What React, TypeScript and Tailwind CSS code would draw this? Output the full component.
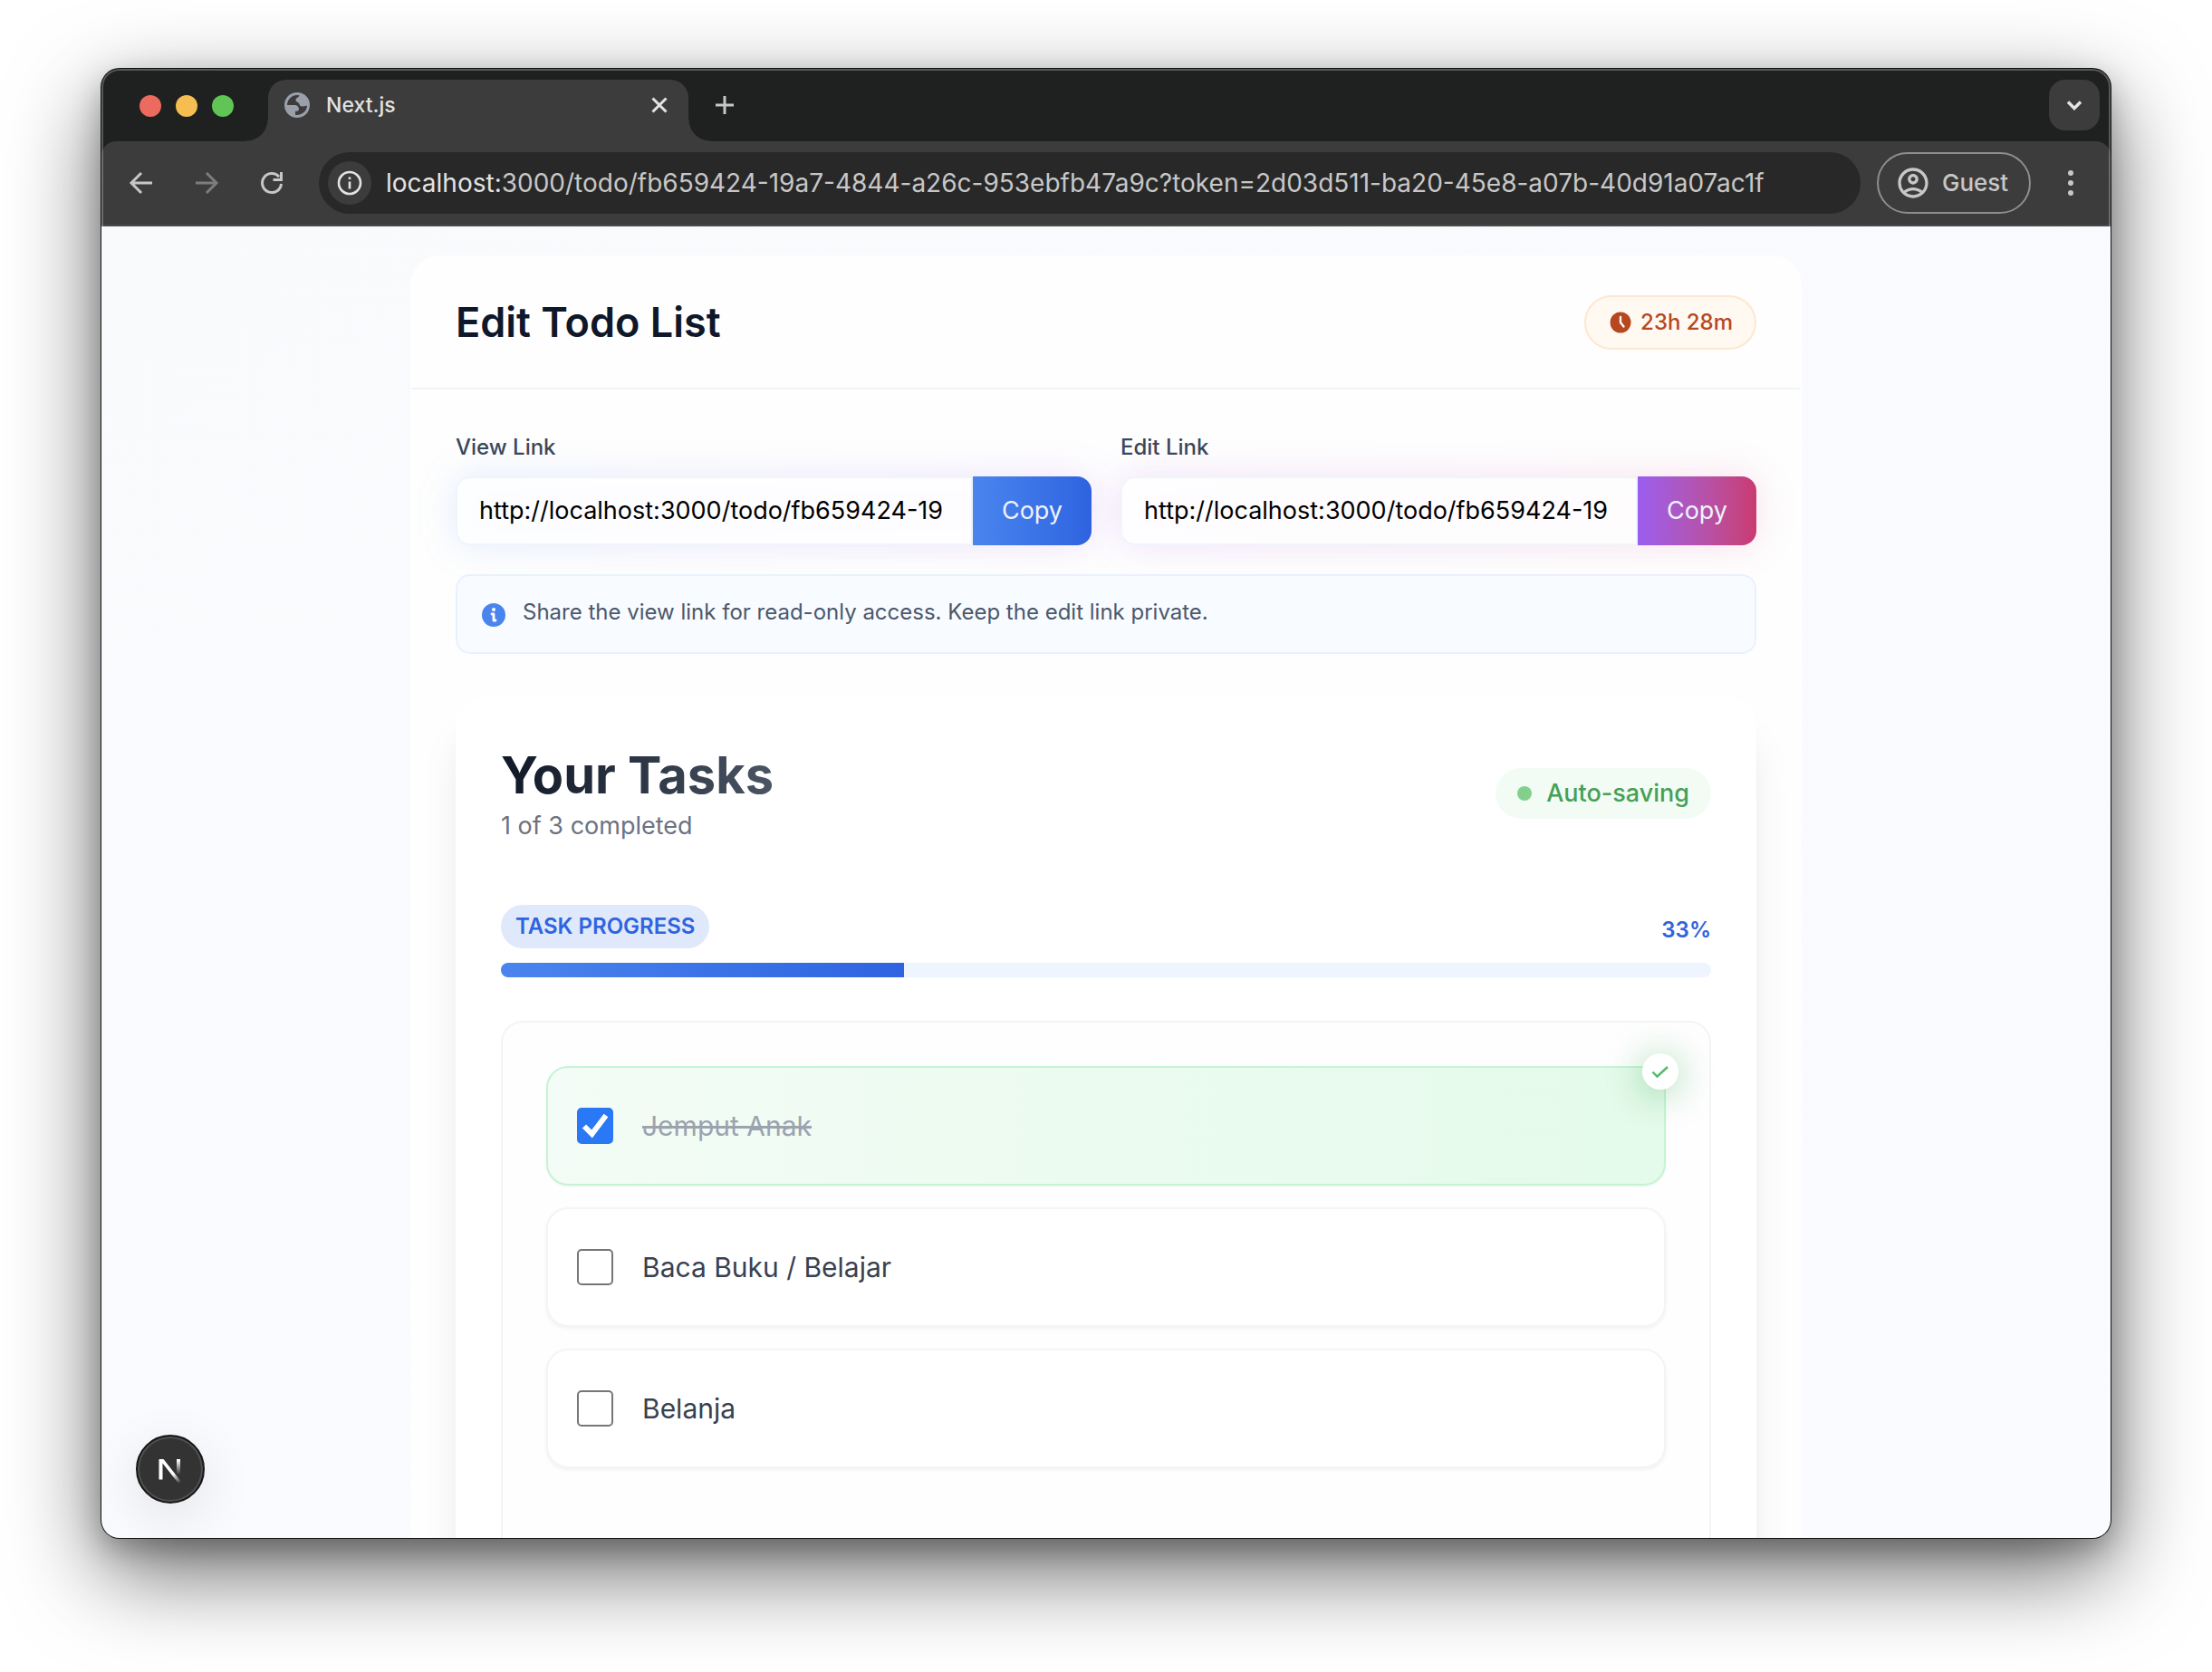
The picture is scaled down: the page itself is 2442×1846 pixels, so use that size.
import { useState, type ReactNode } from "react";
import { MdOutlineAccountCircle } from "react-icons/md";

type Task = { id: number; title: string; done: boolean };

const initialTasks: Task[] = [
  { id: 1, title: "Jemput Anak", done: true },
  { id: 2, title: "Baca Buku / Belajar", done: false },
  { id: 3, title: "Belanja", done: false },
];

function Tab() {
  return (
    <div className="relative flex h-[68px] w-[464px] items-center rounded-t-[20px] bg-[#3c3c3c] pb-3 pl-[18px] pr-4 text-[#e3e3e3]">
      <span className="absolute -left-6 bottom-0 size-6 bg-[radial-gradient(circle_at_0_0,transparent_23px,#3c3c3c_24px)]" />
      <span className="absolute -right-6 bottom-0 size-6 bg-[radial-gradient(circle_at_100%_0,transparent_23px,#3c3c3c_24px)]" />
      <svg viewBox="0 0 28 28" className="size-7">
        <circle cx="14" cy="14" r="14" fill="#9aa0a9" />
        <path
          d="M3 14A11 11 0 0 1 16.500 3.300C16 6 12.500 5.500 12.500 8.500C12.500 11 16 10.500 16.500 13C17 16 20 16 25 14.500A11 11 0 0 1 12 24.800V20.700H14Q16 20.500 16 18.500Q15.500 14 11.500 14Z"
          fill="#3c3c3c"
        />
      </svg>
      <span className="ml-[18px] flex-1 text-[23px] leading-8 font-medium">Next.js</span>
      <button aria-label="Close tab" className="grid size-8 place-items-center">
        <svg viewBox="0 0 32 32" className="size-8" fill="none" stroke="currentColor" strokeWidth="3">
          <path d="M8.500 8.500 23.500 23.500M23.500 8.500 8.500 23.500" />
        </svg>
      </button>
    </div>
  );
}

function IconButton({ label, className, children }: { label: string; className: string; children: ReactNode }) {
  return (
    <button aria-label={label} className={`grid size-10 place-items-center ${className}`}>
      <svg viewBox="0 0 32 32" className="size-8" fill="none" stroke="currentColor" strokeWidth="3">
        {children}
      </svg>
    </button>
  );
}

function BrowserChrome() {
  return (
    <header className="relative shrink-0 bg-[#1f2120]">
      <div className="flex h-20 items-end">
        <div className="flex h-20 w-[184px] shrink-0 items-center gap-4 pl-[42px] pt-[2px]">
          <span className="size-6 rounded-full bg-[#ed6a5f]" />
          <span className="size-6 rounded-full bg-[#f6be50]" />
          <span className="size-6 rounded-full bg-[#61c555]" />
        </div>
        <Tab />
        <div className="flex flex-1 items-start justify-between self-stretch pl-5 pr-3 pt-3">
          <div className="pt-2">
            <IconButton label="New tab" className="text-[#c7c7c7]">
              <path d="M16 6v20M6 16h20" />
            </IconButton>
          </div>
          <button aria-label="Search tabs" className="grid size-14 place-items-center rounded-[18px] bg-[#3c3c3c] text-[#e3e3e3]">
            <svg viewBox="0 0 32 32" className="size-8" fill="none" stroke="currentColor" strokeWidth="3.500">
              <path d="m9 12.500 7 7 7-7" />
            </svg>
          </button>
        </div>
      </div>
      <div className="flex h-[94px] items-center rounded-t-2xl border-b-2 border-[#4a4a4a] bg-[#3c3c3c] px-6 text-[#c7c7c7]">
        <div className="flex gap-8">
          <IconButton label="Back" className="">
            <path d="M28 16H6M16 5 5 16l11 11" />
          </IconButton>
          <IconButton label="Forward" className="text-[#7d7d7d]">
            <path d="M4 16h22M16 5l11 11-11 11" />
          </IconButton>
          <IconButton label="Reload" className="">
            <path d="M26.500 17A10.500 10.500 0 1 1 24 9.200M26.500 4v8.500h-9" />
          </IconButton>
        </div>
        <div className="ml-8 flex h-[68px] min-w-0 flex-1 items-center rounded-full bg-[#282828] px-[10px]">
          <span className="grid size-12 shrink-0 place-items-center rounded-full bg-[#3c3c3c] text-[#e3e3e3]">
            <svg viewBox="0 0 32 32" className="size-8" fill="none" stroke="currentColor" strokeWidth="2.600">
              <circle cx="16" cy="16" r="12" />
              <path d="M16 14.500v8M16 9.500v2.500" />
            </svg>
          </span>
          <p className="ml-4 flex-1 overflow-hidden text-[28px] leading-9 whitespace-nowrap">
            <span className="text-[#e3e3e3]">localhost:</span>
            3000/todo/fb659424-19a7-4844-a26c-953ebfb47a9c?token=2d03d511-ba20-45e8-a07b-40d91a07ac1f
          </p>
        </div>
        <button className="ml-[18px] flex h-[68px] w-[170px] items-center rounded-full border-2 border-[#8e8e8e] pl-[18px] text-[26px] leading-8 font-medium">
          <MdOutlineAccountCircle className="size-10" />
          <span className="ml-3">Guest</span>
        </button>
        <button aria-label="More options" className="ml-6 grid size-10 place-items-center">
          <svg viewBox="0 0 32 32" className="size-8" fill="currentColor">
            <circle cx="16" cy="5" r="3" />
            <circle cx="16" cy="16" r="3" />
            <circle cx="16" cy="27" r="3" />
          </svg>
        </button>
      </div>
      <span className="pointer-events-none absolute inset-0 rounded-t-[20px] border-x-2 border-t-2 border-white/25" />
    </header>
  );
}

function LinkField({ id, label, glow, button }: { id: string; label: string; glow: string; button: string }) {
  return (
    <div className="flex min-w-0 flex-col gap-4">
      <label htmlFor={id} className="relative z-10 self-start text-[24px] leading-8 font-medium text-[#3b475c]">
        {label}
      </label>
      <div className="relative flex h-[76px]">
        <div className={`absolute inset-0 rounded-2xl blur-[20px] ${glow}`} />
        <input
          id={id}
          readOnly
          value="http://localhost:3000/todo/fb659424-19"
          className="relative min-w-0 flex-1 rounded-l-2xl border-2 border-[#f1f5f9] bg-white/90 pl-6 text-[27px] text-black outline-none"
        />
        <button className={`relative w-[131px] rounded-r-2xl text-[27px] text-[#eef3fd] ${button}`}>Copy</button>
      </div>
    </div>
  );
}

function TaskRow({ task, onToggle }: { task: Task; onToggle: () => void }) {
  return (
    <li
      className={
        task.done
          ? "relative rounded-3xl border-2 border-[#c5f4d3] bg-linear-to-r from-[#f3fcf6] to-[#e4faea] shadow-xs"
          : "relative rounded-3xl border-2 border-[#f3f4f6] bg-white shadow-[0_2px_4px_rgba(0,0,0,0.05)]"
      }
    >
      <label className="flex h-32 items-center gap-8 px-8">
        <span className="relative size-10 shrink-0">
          <input
            type="checkbox"
            checked={task.done}
            onChange={onToggle}
            className="block size-10 appearance-none rounded-[5px] border-2 border-[#767676] bg-white checked:border-[#2b78f6] checked:bg-[#2b78f6]"
          />
          {task.done && (
            <svg viewBox="0 0 40 40" className="pointer-events-none absolute inset-0 size-10" fill="none" stroke="white" strokeWidth="6">
              <path d="m8 20.500 8.500 8.500L32 8.500" />
            </svg>
          )}
        </span>
        <span className={task.done ? "text-[30px] leading-10 text-[#9ca3af] line-through decoration-3" : "text-[30px] leading-10 text-[#374151]"}>
          {task.title}
        </span>
      </label>
      {task.done && (
        <span className="absolute -right-4 -top-4 grid size-10 place-items-center rounded-full bg-white shadow-[0_4px_40px_rgba(34,160,60,0.45)]">
          <svg viewBox="0 0 20 20" className="size-5" fill="none" stroke="#55b96a" strokeWidth="2.400">
            <path d="m1.500 10.500 5 5L18 5" />
          </svg>
        </span>
      )}
    </li>
  );
}

function NextBadge() {
  return (
    <button
      aria-label="Open Next.js Dev Tools"
      className="absolute bottom-[38px] left-[38px] grid size-[76px] place-items-center rounded-full border-2 border-[#171717] bg-[#333] shadow-[inset_0_0_0_2px_#505050,0_16px_64px_-8px_rgba(0,0,0,0.16)]"
    >
      <svg viewBox="0 0 40 40" className="size-10" fill="none">
        <defs>
          <linearGradient id="n-diagonal" gradientUnits="userSpaceOnUse" x1="24" y1="25" x2="31" y2="35">
            <stop stopColor="#fff" />
            <stop offset="1" stopColor="#fff" stopOpacity="0" />
          </linearGradient>
          <linearGradient id="n-stem" gradientUnits="userSpaceOnUse" x1="28" y1="10" x2="28" y2="26">
            <stop stopColor="#fff" />
            <stop offset="1" stopColor="#fff" stopOpacity="0" />
          </linearGradient>
        </defs>
        <path d="M7.500 9h5L32.500 34.500 30 37 11.500 13.500V31.500h-4z" fill="url(#n-diagonal)" />
        <path d="M27 9h4v17h-4z" fill="url(#n-stem)" />
      </svg>
    </button>
  );
}

export default function App() {
  const [tasks, setTasks] = useState(initialTasks);
  const doneCount = tasks.filter((t) => t.done).length;
  const ratio = (doneCount / tasks.length) * 100;
  const toggle = (id: number) => setTasks((all) => all.map((t) => (t.id === id ? { ...t, done: !t.done } : t)));

  return (
    <div className="flex h-screen flex-col overflow-hidden bg-white px-28 pt-[76px] pb-[148px] font-['Inter',sans-serif]">
      <div className="relative flex min-h-0 flex-1 flex-col overflow-hidden rounded-[20px] bg-[#1f2120] shadow-[0_0_0_1px_#111,0_36px_100px_rgba(0,0,0,0.6),0_12px_32px_rgba(0,0,0,0.25)]">
        <BrowserChrome />
        <main className="min-h-0 flex-1 overflow-hidden bg-linear-to-br from-[#f9fafc] to-[#fafbff] pt-8">
          <div className="mx-auto max-w-[1536px] rounded-t-[32px] border-2 border-b-0 border-[#fefefe] bg-[#fefefe]">
            <div className="flex h-[146px] items-center justify-between border-b-2 border-[#f0f4f8] px-12">
              <h1 className="text-[45px] leading-[56px] font-semibold text-[#0f172a]">Edit Todo List</h1>
              <div className="flex h-[60px] items-center gap-2 rounded-full border-2 border-[#fde8cf] bg-[#fff9f1] px-6 text-[24px] leading-8 font-medium text-[#b6471f]">
                <svg viewBox="0 0 28 28" className="size-7">
                  <circle cx="14" cy="14" r="11.500" fill="currentColor" />
                  <path d="M14 8v6l3.500 4.500" fill="none" stroke="#fff9f1" strokeWidth="2.400" strokeLinecap="round" />
                </svg>
                23h 28m
              </div>
            </div>

            <div className="px-12 pt-12">
              <div className="grid grid-cols-2 gap-8">
                <LinkField
                  id="view-link"
                  label="View Link"
                  glow="bg-linear-to-r from-[#3b82f6]/15 to-[#9333ea]/15"
                  button="bg-linear-to-r from-[#4a85ee] to-[#2f63e0]"
                />
                <LinkField
                  id="edit-link"
                  label="Edit Link"
                  glow="bg-linear-to-r from-[#9333ea]/15 to-[#db2777]/15"
                  button="bg-linear-to-r from-[#9b5df0] to-[#ca3a70]"
                />
              </div>

              <div className="relative mt-8 flex h-[88px] items-start gap-4 rounded-2xl border-2 border-[#e8f1fe] bg-[#f8fbff] px-6 pt-6 text-[#4b586b]">
                <svg viewBox="0 0 32 32" className="size-8" fill="#4a85ee">
                  <circle cx="16" cy="19" r="13" />
                  <circle cx="16" cy="13" r="2" fill="#fff" />
                  <path d="M14 18H16v7h2" fill="none" stroke="#fff" strokeWidth="2.800" strokeLinecap="round" strokeLinejoin="round" />
                </svg>
                <p className="text-[24px] leading-8">Share the view link for read-only access. Keep the edit link private.</p>
              </div>

              <section className="mt-12 rounded-t-[32px] bg-white px-[50px] pt-[50px] shadow-[0_40px_50px_-10px_rgba(0,0,0,0.1),0_16px_20px_-12px_rgba(0,0,0,0.1)]">
                <div className="flex items-center justify-between">
                  <div>
                    <h2 className="w-fit bg-linear-to-r from-[#111827] to-[#4b5563] bg-clip-text text-[56px] leading-[72px] font-bold text-transparent">
                      Your Tasks
                    </h2>
                    <p className="text-[27px] leading-10 text-[#6b7280]">
                      {doneCount} of {tasks.length} completed
                    </p>
                  </div>
                  <div className="flex h-14 items-center gap-4 rounded-full bg-[#f2fcf5] px-6 text-[27px] leading-8 font-medium text-[#47a054]">
                    <span className="size-4 rounded-full bg-[#83d08d]" />
                    Auto-saving
                  </div>
                </div>

                <div className="mt-[67px] flex items-end justify-between text-[24px] leading-8 font-semibold text-[#2f63e0]">
                  <span id="progress-label" className="flex h-12 items-center rounded-full bg-[#dfe9fb] px-4 uppercase">
                    Task progress
                  </span>
                  <span className="pb-1">{Math.round(ratio)}%</span>
                </div>
                <div
                  role="progressbar"
                  aria-labelledby="progress-label"
                  aria-valuenow={Math.round(ratio)}
                  className="mt-4 h-4 overflow-hidden rounded-full bg-[#eef5fe]"
                >
                  <div className="h-4 bg-linear-to-r from-[#4a85ee] to-[#2f63e0]" style={{ width: `${ratio}%` }} />
                </div>

                <ul className="mt-12 flex flex-col gap-6 rounded-t-3xl border-2 border-b-0 border-[#f3f4f6] bg-[#fefefe] p-12 pb-40">
                  {tasks.map((task) => (
                    <TaskRow key={task.id} task={task} onToggle={() => toggle(task.id)} />
                  ))}
                </ul>
              </section>
            </div>
          </div>
        </main>
        <NextBadge />
      </div>
    </div>
  );
}
